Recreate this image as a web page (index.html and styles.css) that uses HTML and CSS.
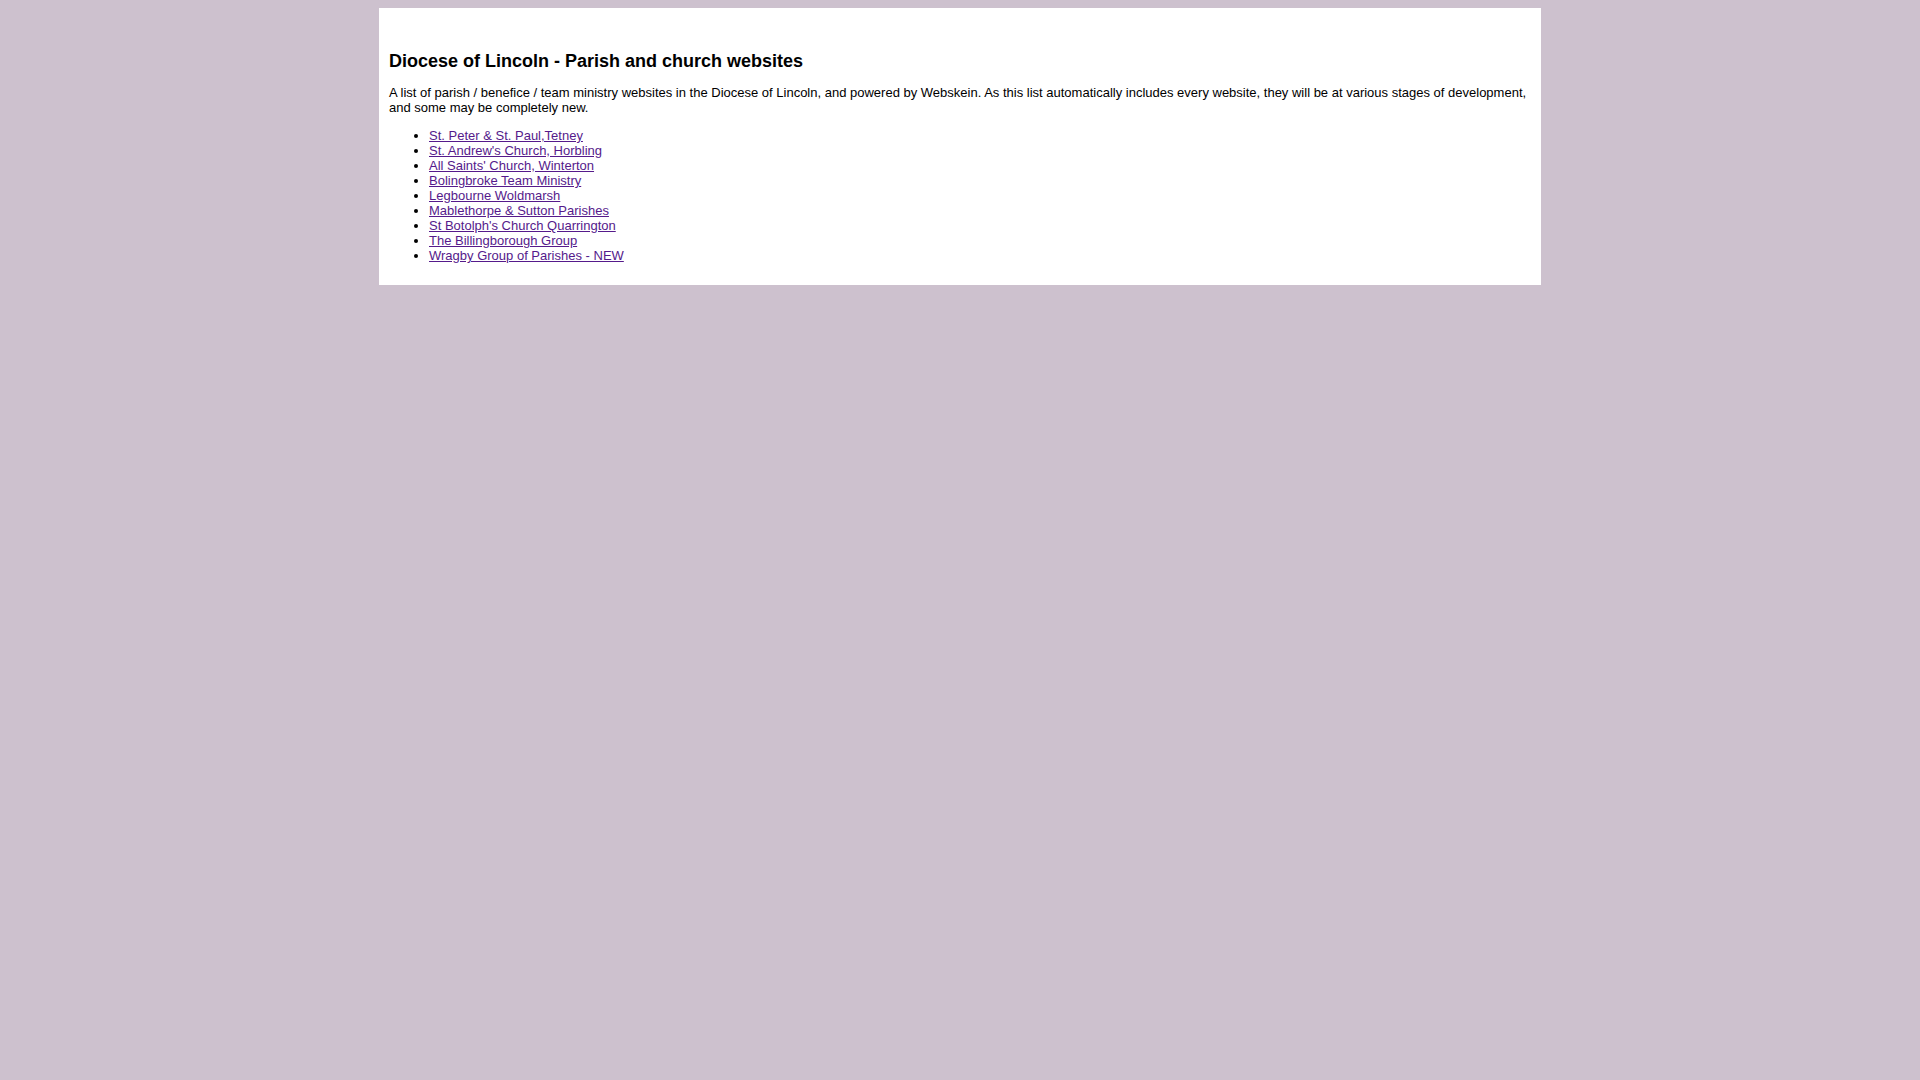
FILE: index.html
```html
<!DOCTYPE html>
<html lang="en">
<head>
    <meta charset="UTF-8">
    <meta name="viewport" content="width=device-width, initial-scale=1.0">
    <title>Diocese of Lincoln - Parish and church websites</title>
    <link rel="stylesheet" href="styles.css">
</head>
<body>
    <div class="container">
        <h1>Diocese of Lincoln - Parish and church websites</h1>
        <p>A list of parish / benefice / team ministry websites in the Diocese of Lincoln, and powered by Webskein. As this list automatically includes every website, they will be at various stages of development, and some may be completely new.</p>
        <ul>
            <li><a href="#">St. Peter &amp; St. Paul,Tetney</a></li>
            <li><a href="#">St. Andrew's Church, Horbling</a></li>
            <li><a href="#">All Saints' Church, Winterton</a></li>
            <li><a href="#">Bolingbroke Team Ministry</a></li>
            <li><a href="#">Legbourne Woldmarsh</a></li>
            <li><a href="#">Mablethorpe &amp; Sutton Parishes</a></li>
            <li><a href="#">St Botolph's Church Quarrington</a></li>
            <li><a href="#">The Billingborough Group</a></li>
            <li><a href="#">Wragby Group of Parishes - NEW</a></li>
        </ul>
    </div>
</body>
</html>
```
FILE: styles.css
```css
body {
    margin: 8px;
    font-family: Arial, "Liberation Sans", sans-serif;
    font-size: 13px;
    line-height: 15px;
    color: #000;
    background: #cdc1ce;
}

.container {
    max-width: 1142px;
    margin: 0 auto;
    padding: 41px 10px 10px;
    background: #fff;
}

h1 {
    margin: 0 0 12px;
    font-size: 18px;
    line-height: 24px;
}

p {
    margin: 0 0 13px;
}

ul {
    margin: 0 0 12px;
    padding-left: 40px;
}

a {
    color: #551a8b;
}
```
